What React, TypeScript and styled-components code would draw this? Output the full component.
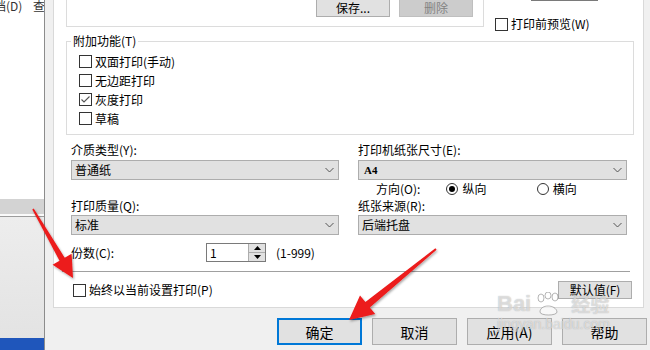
import styled, { createGlobalStyle } from "styled-components";

const GlobalStyle = createGlobalStyle`
  html, body { margin: 0; padding: 0; background: #f0f0f0; }
  body {
    font-family: "Noto Sans CJK SC", "Noto Sans", sans-serif;
    font-size: 12px;
    line-height: 14px;
    color: #000;
  }
`;

const Screen = styled.div`
  position: relative;
  width: 650px;
  height: 350px;
  overflow: hidden;
  display: flex;
`;

/* window behind the dialog */
const BackWindow = styled.div`
  width: 44px;
  flex-shrink: 0;
  border-right: 1px solid #8c8c8c;
  background: #fff;
  display: flex;
  flex-direction: column;
`;

const BackMenu = styled.div`
  height: 199px;
  margin-left: -6px;
  white-space: nowrap;
  overflow: hidden;
  font-size: 12px;
  line-height: 12px;
  color: #333;
`;

const BackBand = styled.div`
  height: 15px;
  background: #d3d3d3;
  border-bottom: 2px solid #fafafa;
`;

const BackLine = styled.div`
  height: 1px;
  background: #9c9c9c;
`;

const BackPane = styled.div`
  flex: 1;
  background: linear-gradient(#ededed, #e3e3e3);
`;

const BackTaskbar = styled.div`
  height: 12px;
  background: #1f56bb;
`;

/* dialog */
const Dialog = styled.div`
  flex: 1;
  background: #f0f0f0;
  padding-left: 8px;
  display: flex;
  flex-direction: column;
`;

const TabPage = styled.div`
  width: 591px;
  height: 308px;
  box-sizing: border-box;
  background: #fff;
  border: 1px solid #d9d9d9;
  border-top: none;
  padding-left: 12px;
  display: flex;
  flex-direction: column;
`;

const TopRow = styled.div`
  display: flex;
  height: 27px;
`;

const PresetBox = styled.div`
  width: 418px;
  height: 27px;
  box-sizing: border-box;
  border: 1px solid #dcdcdc;
  border-top: none;
  display: flex;
  justify-content: flex-end;
  align-items: flex-start;
  gap: 9px;
  padding-right: 10px;
`;

const SmallButton = styled.div<{ $disabled?: boolean }>`
  width: 74px;
  height: 17px;
  box-sizing: border-box;
  border: 1px solid ${(p) => (p.$disabled ? "#bfbfbf" : "#adadad")};
  border-top: none;
  background: ${(p) => (p.$disabled ? "#cccccc" : "#e1e1e1")};
  color: ${(p) => (p.$disabled ? "#838383" : "#000")};
  display: flex;
  align-items: center;
  justify-content: center;
  line-height: 16px;
`;

const TopSide = styled.div`
  flex: 1;
  padding-left: 11px;
  display: flex;
  flex-direction: column;
`;

const CutButton = styled.div`
  width: 67px;
  height: 2px;
  margin-left: 36px;
  background: #e1e1e1;
  border-bottom: 1px solid #7a7a7a;
  box-sizing: border-box;
`;

const CheckRow = styled.label<{ $indent?: number }>`
  display: flex;
  align-items: center;
  gap: 3px;
  height: 19px;
  margin-left: ${(p) => p.$indent ?? 0}px;
  white-space: nowrap;
`;

const Box = styled.span`
  width: 13px;
  height: 13px;
  box-sizing: border-box;
  border: 1px solid #333;
  background: #fff;
  flex-shrink: 0;
  display: inline-flex;
  align-items: center;
  justify-content: center;
`;

const PreviewRow = styled(CheckRow)`
  margin-top: 16px;
  height: 14px;
`;

const Group = styled.fieldset`
  margin: 7px 0 0 0;
  width: 568px;
  box-sizing: border-box;
  border: 1px solid #dcdcdc;
  padding: 4px 0 6px 4px;
  min-inline-size: 0;
`;

const Legend = styled.legend`
  padding: 0 2px;
  line-height: 14px;
`;

const CheckList = styled.div`
  padding-left: 8px;
  display: flex;
  flex-direction: column;
`;

const FormGrid = styled.div`
  margin: 7px 0 0 5px;
  display: grid;
  grid-template-columns: 268px 269px;
  grid-template-rows: 18px 20px 18px 17px 20px;
  column-gap: 19px;
`;

const FieldLabel = styled.div<{ $row: number; $col: number }>`
  grid-row: ${(p) => p.$row};
  grid-column: ${(p) => p.$col};
  line-height: 14px;
  padding-top: 1px;
`;

const Select = styled.div<{ $row: number; $col: number }>`
  grid-row: ${(p) => p.$row};
  grid-column: ${(p) => p.$col};
  box-sizing: border-box;
  border: 1px solid #adadad;
  background: #e1e1e1;
  display: flex;
  align-items: center;
  justify-content: space-between;
  padding: 0 4px 0 3px;
`;

const SerifValue = styled.span`
  font-family: "Liberation Serif", serif;
  font-weight: bold;
  font-size: 11px;
  padding-left: 2px;
`;

const Orientation = styled.div`
  grid-row: 3;
  grid-column: 2;
  display: flex;
  align-items: center;
  padding-left: 18px;
`;

const OrientLabel = styled.span`
  width: 71px;
`;

const RadioOption = styled.label`
  width: 91px;
  display: flex;
  align-items: center;
  gap: 4px;
`;

const RadioCircle = styled.span<{ $on?: boolean }>`
  width: 12px;
  height: 12px;
  box-sizing: border-box;
  border-radius: 50%;
  border: 1px solid #333;
  background: #fff;
  display: inline-flex;
  align-items: center;
  justify-content: center;
  &::after {
    content: "";
    width: 6px;
    height: 6px;
    border-radius: 50%;
    background: ${(p) => (p.$on ? "#000" : "transparent")};
  }
`;

const CountRow = styled.div`
  margin: 8px 0 0 5px;
  height: 19px;
  display: flex;
  align-items: center;
`;

const CountLabel = styled.span`
  width: 135px;
`;

const Spinner = styled.div`
  width: 60px;
  height: 19px;
  box-sizing: border-box;
  border: 1px solid #7a7a7a;
  display: flex;
`;

const SpinValue = styled.span`
  flex: 1;
  padding-left: 3px;
  line-height: 17px;
`;

const SpinButtons = styled.div`
  width: 16px;
  display: flex;
  flex-direction: column;
  border-left: 1px solid #adadad;
`;

const SpinHalf = styled.div<{ $down?: boolean }>`
  flex: 1;
  background: #e1e1e1;
  border-top: ${(p) => (p.$down ? "1px solid #adadad" : "none")};
  display: flex;
  align-items: center;
  justify-content: center;
`;

const Range = styled.span`
  margin-left: 10px;
`;

const Separator = styled.div`
  margin: 9px 0 0 -4px;
  width: 568px;
  height: 1px;
  background: #a0a0a0;
`;

const BottomRow = styled.div`
  margin-top: 9px;
  width: 566px;
  height: 18px;
  display: flex;
  align-items: center;
  justify-content: space-between;
`;

const DefaultButton = styled.div`
  width: 74px;
  height: 18px;
  box-sizing: border-box;
  border: 1px solid #adadad;
  background: #e1e1e1;
  display: flex;
  align-items: center;
  justify-content: center;
`;

const ButtonRow = styled.div`
  margin-top: 10px;
  display: flex;
  justify-content: flex-end;
  gap: 10px;
  padding-right: 3px;
`;

const DialogButton = styled.div<{ $primary?: boolean }>`
  width: 85px;
  height: 27px;
  box-sizing: border-box;
  border: ${(p) => (p.$primary ? "2px solid #0078d7" : "1px solid #adadad")};
  background: #e1e1e1;
  font-size: 14px;
  display: flex;
  align-items: center;
  justify-content: center;
`;

/* annotations laid over the screenshot */
const Overlay = styled.svg`
  position: absolute;
  left: 0;
  top: 0;
  pointer-events: none;
`;

const Watermark = styled.div`
  position: absolute;
  left: 497px;
  top: 292px;
  pointer-events: none;
  color: rgba(255, 255, 255, 0.55);
  text-shadow: 0 0 1px rgba(110, 110, 110, 0.55);
`;

const MarkTop = styled.div`
  display: flex;
  align-items: flex-end;
  gap: 3px;
  font-family: "Liberation Sans", sans-serif;
  font-weight: bold;
  font-size: 22px;
  line-height: 24px;
`;

const MarkCn = styled.span`
  font-family: "Noto Sans CJK SC", sans-serif;
  font-size: 19px;
  margin-left: 4px;
`;

const MarkUrl = styled.div`
  font-family: "Liberation Sans", sans-serif;
  font-size: 14px;
  line-height: 14px;
  margin-top: 1px;
`;

const Check = ({ checked }: { checked?: boolean }) => (
  <Box>
    {checked && (
      <svg width="11" height="11" viewBox="0 0 11 11">
        <polyline points="1.5,5.5 4,8 9.5,2.5" fill="none" stroke="#555" strokeWidth="1.1" />
      </svg>
    )}
  </Box>
);

const Chevron = () => (
  <svg width="9" height="6" viewBox="0 0 9 6">
    <polyline points="0.5,1 4.5,5 8.5,1" fill="none" stroke="#555" strokeWidth="1" />
  </svg>
);

const Paw = () => (
  <svg width="30" height="24" viewBox="0 0 30 24">
    <g fill="rgba(255,255,255,0.55)" stroke="rgba(110,110,110,0.5)" strokeWidth="1">
      <ellipse cx="7" cy="6" rx="3" ry="4" />
      <ellipse cx="14" cy="3.5" rx="3" ry="3.5" />
      <ellipse cx="21" cy="5" rx="3" ry="4" />
      <path d="M6 20 C6 12 22 12 23 20 C23 24 6 24 6 20 Z" />
    </g>
  </svg>
);

const arrow = (pts: number[][]) => pts.map((p) => p.join(",")).join(" ");

export default function App() {
  const media = [
    { label: "介质类型(Y):", value: "普通纸" },
    { label: "打印质量(Q):", value: "标准" },
  ];

  return (
    <Screen>
      <GlobalStyle />
      <BackWindow>
        <BackMenu>档(D)&nbsp;&nbsp;&nbsp;&nbsp;查</BackMenu>
        <BackBand />
        <BackLine />
        <BackPane />
        <BackTaskbar />
      </BackWindow>

      <Dialog>
        <TabPage>
          <TopRow>
            <PresetBox>
              <SmallButton>保存...</SmallButton>
              <SmallButton $disabled>删除</SmallButton>
            </PresetBox>
            <TopSide>
              <CutButton />
              <PreviewRow>
                <Check />
                打印前预览(W)
              </PreviewRow>
            </TopSide>
          </TopRow>

          <Group>
            <Legend>附加功能(T)</Legend>
            <CheckList>
              <CheckRow><Check />双面打印(手动)</CheckRow>
              <CheckRow><Check />无边距打印</CheckRow>
              <CheckRow><Check checked />灰度打印</CheckRow>
              <CheckRow><Check />草稿</CheckRow>
            </CheckList>
          </Group>

          <FormGrid>
            <FieldLabel $row={1} $col={1}>{media[0].label}</FieldLabel>
            <Select $row={2} $col={1}>{media[0].value}<Chevron /></Select>
            <FieldLabel $row={4} $col={1}>{media[1].label}</FieldLabel>
            <Select $row={5} $col={1}>{media[1].value}<Chevron /></Select>

            <FieldLabel $row={1} $col={2}>打印机纸张尺寸(E):</FieldLabel>
            <Select $row={2} $col={2}><SerifValue>A4</SerifValue><Chevron /></Select>
            <Orientation>
              <OrientLabel>方向(O):</OrientLabel>
              <RadioOption><RadioCircle $on />纵向</RadioOption>
              <RadioOption><RadioCircle />横向</RadioOption>
            </Orientation>
            <FieldLabel $row={4} $col={2}>纸张来源(R):</FieldLabel>
            <Select $row={5} $col={2}>后端托盘<Chevron /></Select>
          </FormGrid>

          <CountRow>
            <CountLabel>份数(C):</CountLabel>
            <Spinner>
              <SpinValue>1</SpinValue>
              <SpinButtons>
                <SpinHalf>
                  <svg width="7" height="4" viewBox="0 0 7 4"><polygon points="0,4 7,4 3.5,0" fill="#000" /></svg>
                </SpinHalf>
                <SpinHalf $down>
                  <svg width="7" height="4" viewBox="0 0 7 4"><polygon points="0,0 7,0 3.5,4" fill="#000" /></svg>
                </SpinHalf>
              </SpinButtons>
            </Spinner>
            <Range>(1-999)</Range>
          </CountRow>

          <Separator />

          <BottomRow>
            <CheckRow $indent={7}>
              <Check />
              始终以当前设置打印(P)
            </CheckRow>
            <DefaultButton>默认值(F)</DefaultButton>
          </BottomRow>
        </TabPage>

        <ButtonRow>
          <DialogButton $primary>确定</DialogButton>
          <DialogButton>取消</DialogButton>
          <DialogButton>应用(A)</DialogButton>
          <DialogButton>帮助</DialogButton>
        </ButtonRow>
      </Dialog>

      <Watermark>
        <MarkTop>
          <span>Bai</span>
          <Paw />
          <MarkCn>经验</MarkCn>
        </MarkTop>
        <MarkUrl>jingyan.baidu.com</MarkUrl>
      </Watermark>

      <Overlay width="650" height="350" viewBox="0 0 650 350">
        <defs>
          <filter id="shadow" x="-20%" y="-20%" width="140%" height="140%">
            <feDropShadow dx="1" dy="1.5" stdDeviation="1.2" floodColor="#000" floodOpacity="0.35" />
          </filter>
        </defs>
        <polygon
          filter="url(#shadow)"
          fill="#ec1a1a"
          points={arrow([
            [32.3, 209.4],
            [59.5, 260.7],
            [52.6, 264.7],
            [73, 278],
            [71.6, 253.7],
            [64.7, 257.7],
            [33.7, 208.6],
          ])}
        />
        <polygon
          filter="url(#shadow)"
          fill="#ec1a1a"
          points={arrow([
            [435.4, 248.2],
            [365.4, 302.1],
            [360, 295.5],
            [349, 320],
            [375.2, 314.1],
            [369.8, 307.5],
            [436.6, 249.8],
          ])}
        />
      </Overlay>
    </Screen>
  );
}
